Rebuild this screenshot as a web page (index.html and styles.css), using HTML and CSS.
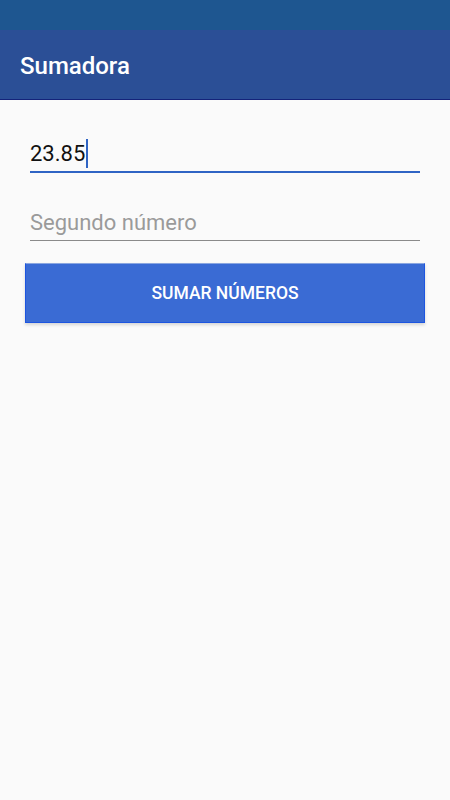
FILE: index.html
```html
<!DOCTYPE html>
<html lang="es">
<head>
  <meta charset="UTF-8">
  <meta name="viewport" content="width=device-width, initial-scale=1.0">
  <title>Sumadora</title>
  <link rel="stylesheet" href="styles.css">
</head>
<body>
  <div class="status-bar"></div>
  <header class="toolbar">
    <h1 class="toolbar-title">Sumadora</h1>
  </header>
  <main class="content">
    <div class="field field-active">
      <span class="field-value">23.85</span><span class="cursor"></span>
    </div>
    <div class="field">
      <span class="field-hint">Segundo número</span>
    </div>
    <button class="btn">SUMAR NÚMEROS</button>
  </main>
</body>
</html>
```

FILE: styles.css
```css
body {
  margin: 0;
  font-family: Roboto, "Noto Sans", sans-serif;
  background-color: #fafafa;
  width: 450px;
  height: 800px;
}
.status-bar {
  height: 30px;
  background-color: #1e5690;
}
.toolbar {
  height: 69px;
  background-color: #2b4f96;
  border-bottom: 1px solid #14237a;
  display: flex;
  align-items: center;
  padding-left: 20px;
}
.toolbar-title {
  margin: 0;
  font-size: 24px;
  font-weight: 500;
  color: #fff;
  padding-top: 3px;
}
.content {
  display: flex;
  flex-direction: column;
  padding: 36px 25px 0;
}
.field {
  margin: 0 5px;
  height: 35px;
  display: flex;
  align-items: center;
  border-bottom: 1px solid #8a8a8a;
  font-size: 22px;
}
.field + .field {
  margin-top: 32px;
}
.field-active {
  border-bottom: 2px solid #2f64c4;
}
.field-value {
  color: #111;
}
.cursor {
  display: inline-block;
  width: 2px;
  height: 29px;
  margin-left: 1px;
  background-color: #2f64c4;
}
.field-hint {
  color: #9a9a9a;
}
.btn {
  margin-top: 22px;
  height: 60px;
  border: 1px solid #1d55e0;
  border-top-color: #8aa6e0;
  background-color: #3a6bd4;
  color: #fff;
  font-family: Roboto, "Noto Sans", sans-serif;
  font-size: 17.5px;
  font-weight: 500;
  box-shadow: 0 2px 3px rgba(0, 0, 0, 0.15);
  padding: 0;
}
```
